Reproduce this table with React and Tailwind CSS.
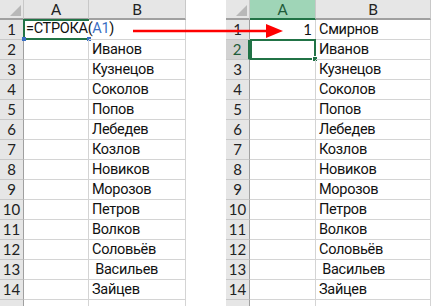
const names = [
  'Иванов',
  'Кузнецов',
  'Соколов',
  'Попов',
  'Лебедев',
  'Козлов',
  'Новиков',
  'Морозов',
  'Петров',
  'Волков',
  'Соловьёв',
  ' Васильев',
  'Зайцев',
]

const font = { fontFamily: 'Lato, "Liberation Sans", Arial, sans-serif' }
const cellFont = { fontFamily: 'Roboto, "Liberation Sans", sans-serif', letterSpacing: '-0.3px', fontSize: '14.5px' }

function Corner() {
  return (
    <div className="relative h-[20px] w-[24px] shrink-0 border-b-2 border-r border-b-[#a0a0a0] border-r-[#c8c8c8] bg-[#e6e6e6]">
      <div className="absolute bottom-[2px] right-[2px] h-0 w-0 border-b-[11px] border-l-[11px] border-b-[#b8b8b8] border-l-transparent" />
    </div>
  )
}

function ColHead({ label, width, selected }) {
  return (
    <div
      className={
        selected
          ? 'flex h-[20px] shrink-0 items-center justify-center border-b-2 border-r border-b-[#217346] border-r-[#c8c8c8] bg-[#9fd5b7] text-[15px] text-[#1f5c3a]'
          : 'flex h-[20px] shrink-0 items-center justify-center border-b-2 border-r border-b-[#a0a0a0] border-r-[#c8c8c8] bg-[#e6e6e6] text-[15px] text-[#222]'
      }
      style={{ width }}
    >
      {label}
    </div>
  )
}

function RowHead({ n, selected }) {
  return (
    <div
      className={
        selected
          ? 'flex h-[20px] w-[24px] shrink-0 items-end justify-center border-b border-r-2 border-b-[#c8c8c8] border-r-[#217346] bg-[#d2d2d2] text-[15px] leading-[19px] text-[#1f5c3a]'
          : 'flex h-[20px] w-[24px] shrink-0 items-end justify-center border-b border-r border-b-[#c8c8c8] border-r-[#a0a0a0] bg-[#e6e6e6] text-[15px] leading-[19px] text-[#222]'
      }
    >
      {n}
    </div>
  )
}

function Cell({ width, children, right, className = '' }) {
  return (
    <div
      className={`relative flex h-[20px] shrink-0 items-end whitespace-pre border-b border-r border-[#d4d4d4] text-[15px] leading-[19px] text-[#111] ${right ? 'justify-end pr-[3px]' : 'pl-[3px]'} ${className}`}
      style={{ width }}
    >
      <span style={right ? undefined : cellFont}>{children}</span>
    </div>
  )
}

function Sheet({ colA, colB, first, variant }) {
  const rows = ['', ...names, '']
  return (
    <div className="flex flex-col" style={{ width: 24 + colA + colB }}>
      <div className="flex">
        <Corner />
        <ColHead label="A" width={colA} selected={variant === 'right'} />
        <ColHead label="B" width={colB} />
      </div>
      {rows.map((name, i) => {
        const n = i + 1
        const label = n === 15 ? '' : n
        if (variant === 'left' && i === 0) {
          return (
            <div key={n} className="flex">
              <RowHead n={label} />
              <div
                className="relative -ml-[1px] -mt-[1px] flex h-[21px] shrink-0 items-end border-b-2 border-l-2 border-t-2 border-[#217346] pl-[1px] text-[15px] leading-[18px] text-[#111]"
                style={{ width: colA + 1 }}
              >
                <span className="relative z-10 whitespace-pre" style={cellFont}>
                  =СТРОКА(<span className="text-[#3a6fc4]">А1</span>)
                </span>
                <div className="absolute -bottom-[3px] -left-[3px] h-[4px] w-[4px] bg-[#3a6fc4]" />
                <div className="absolute -bottom-[3px] -right-[2px] h-[4px] w-[4px] bg-[#3a6fc4]" />
              </div>
              <Cell width={colB} />
            </div>
          )
        }
        return (
          <div key={n} className="flex">
            <RowHead n={label} selected={variant === 'right' && n === 2} />
            {variant === 'right' && n === 2 ? (
              <div className="relative -mt-[1px] h-[21px] shrink-0 border-2 border-[#217346]" style={{ width: colA }}>
                <div className="absolute -bottom-[4px] -right-[4px] h-[6px] w-[6px] border border-white bg-[#217346]" />
              </div>
            ) : (
              <Cell width={colA} right>
                {variant === 'right' && n === 1 ? '1' : ''}
              </Cell>
            )}
            <Cell width={colB}>{i === 0 ? first : name}</Cell>
          </div>
        )
      })}
    </div>
  )
}

export default function App() {
  return (
    <div className="relative h-[306px] w-[434px] overflow-hidden bg-white" style={font}>
      <div className="flex">
        <Sheet colA={65} colB={97} first="" variant="left" />
        <div className="w-[40px] shrink-0" />
        <Sheet colA={66} colB={115} first="Смирнов" variant="right" />
      </div>
      <svg className="absolute left-0 top-0" width="434" height="306">
        <line x1="133" y1="31" x2="268" y2="31" stroke="#ff0000" strokeWidth="2.5" />
        <polygon points="266,24 283,31 266,38" fill="#ff0000" />
      </svg>
    </div>
  )
}
